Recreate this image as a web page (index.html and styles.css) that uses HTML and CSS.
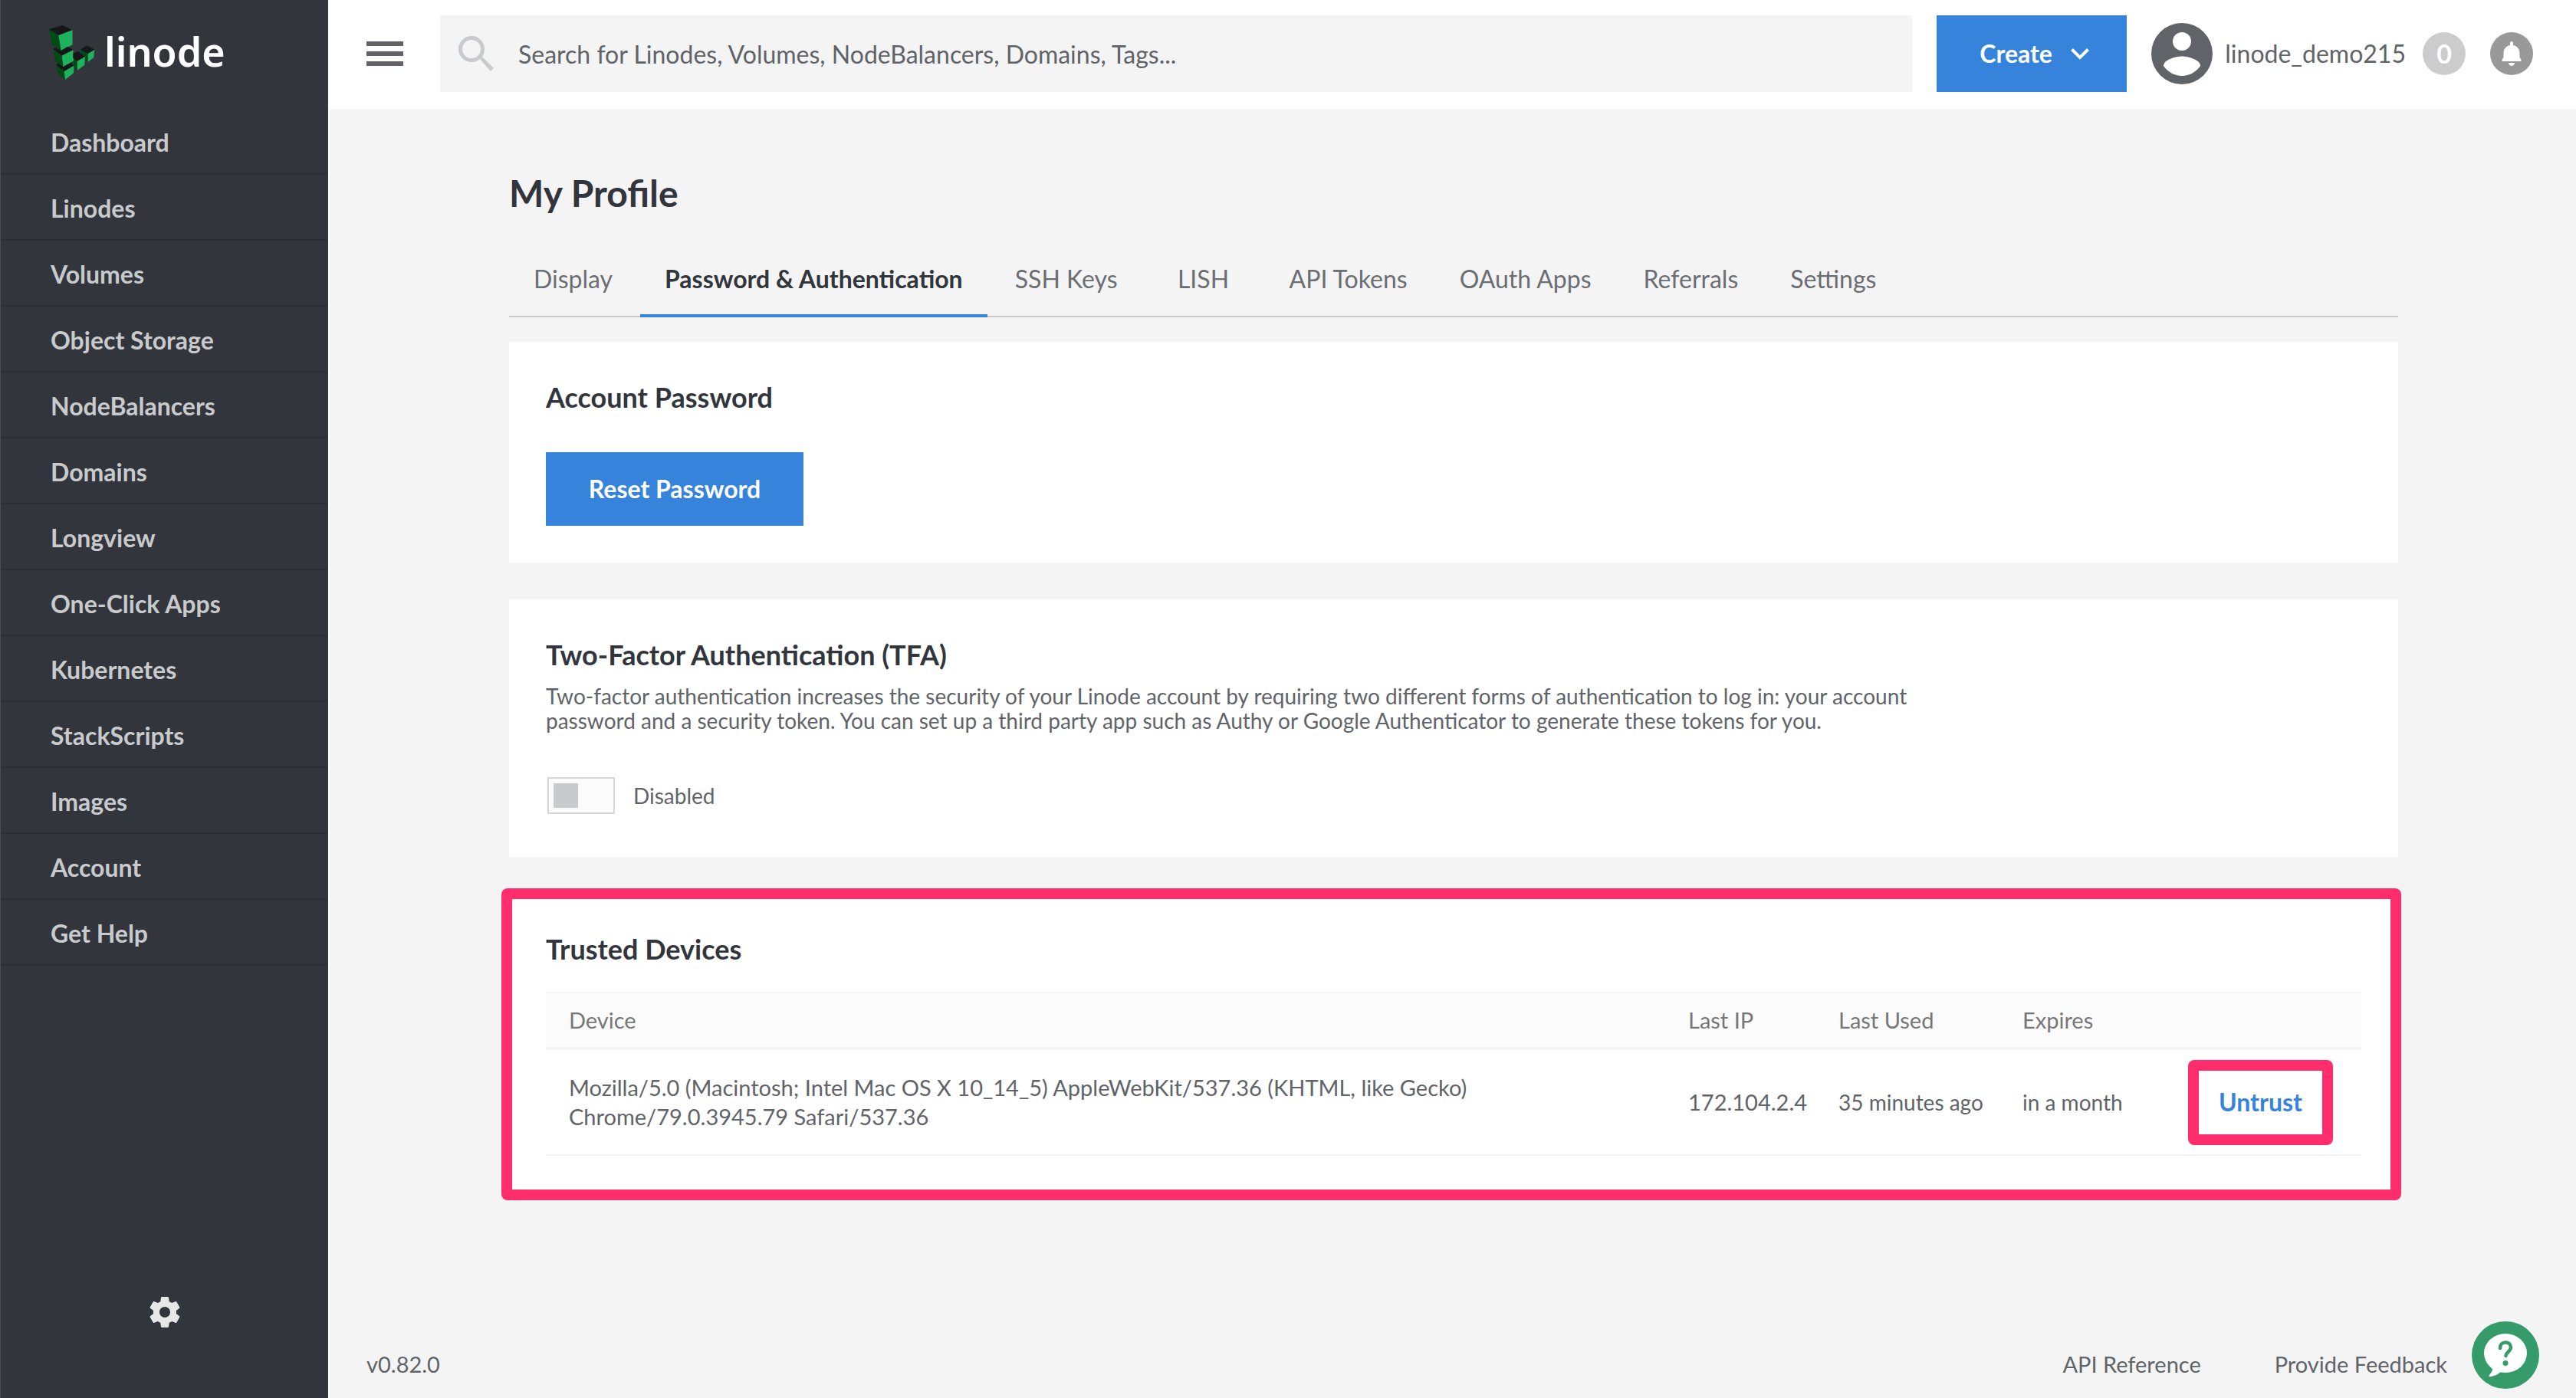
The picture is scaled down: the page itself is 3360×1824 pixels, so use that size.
FILE: index.html
```html
<!DOCTYPE html>
<html lang="en">
<head>
<meta charset="utf-8">
<title>My Profile</title>
<link rel="stylesheet" href="styles.css">
</head>
<body>
<div class="app">
  <aside class="sidebar">
    <a class="logo" href="#" aria-label="linode">
      <svg class="logo-mark" viewBox="0 -4 60 76" aria-hidden="true">
        <path fill="#004b16" d="M0 5L12.300 13 15.700 33 4 25.500zM5.300 31L16.700 39.500 18.500 54.300 8.300 47.500zM9.300 51.500L19.700 60 21 71 11.300 63zM31.300 43L36.700 46.700 37 58.700 32.300 54.300zM41 31.700L50.700 37V48L47 45.700V40.700L42 37z"/>
        <path fill="#1cb35c" d="M12.300 13L30.500 6V25.500L15.700 33zM16.700 39.500L31.300 32 32 46.300 18.500 54.300zM19.700 60L32.300 52.500 32 62.300 21 71zM36.700 46.700L47 40.700 46.300 51.700 37 58.700zM50.700 37L59.300 31.700 58.300 42 50.700 48z"/>
        <path fill="#161718" d="M0 5L17.700 0 30.300 6 12.300 13zM5.300 31L8 29 15.700 33 24.300 27.700 31.300 32 16.700 39.500zM9.300 51.500L11.300 49.300 18.300 54.300 28.300 48.700 32.300 52.500 19.700 60zM31.300 37L37.700 33.700 47 40.700 36.700 46.700 31.300 43zM41 31.700L49.700 26.300 59.300 31.700 50.700 37z"/>
      </svg>
      <span class="logo-text">linode</span>
    </a>
    <nav class="nav">
      <a href="#">Dashboard</a>
      <a href="#">Linodes</a>
      <a href="#">Volumes</a>
      <a href="#">Object Storage</a>
      <a href="#">NodeBalancers</a>
      <a href="#">Domains</a>
      <a href="#">Longview</a>
      <a href="#">One-Click Apps</a>
      <a href="#">Kubernetes</a>
      <a href="#">StackScripts</a>
      <a href="#">Images</a>
      <a href="#">Account</a>
      <a href="#">Get Help</a>
    </nav>
    <button class="gear" type="button" aria-label="Settings">
      <svg viewBox="0 0 24 24" aria-hidden="true"><path d="M19.43 12.98c.04-.32.07-.64.07-.98s-.03-.66-.07-.98l2.11-1.65c.19-.15.24-.42.12-.64l-2-3.46c-.12-.22-.39-.3-.61-.22l-2.49 1c-.52-.4-1.08-.73-1.69-.98l-.38-2.65C14.46 2.18 14.25 2 14 2h-4c-.25 0-.46.18-.49.42l-.38 2.65c-.61.25-1.17.59-1.69.98l-2.49-1c-.23-.09-.49 0-.61.22l-2 3.46c-.13.22-.07.49.12.64l2.11 1.65c-.04.32-.07.65-.07.98s.03.66.07.98l-2.11 1.65c-.19.15-.24.42-.12.64l2 3.46c.12.22.39.3.61.22l2.49-1c.52.4 1.08.73 1.69.98l.38 2.65c.03.24.24.42.49.42h4c.25 0 .46-.18.49-.42l.38-2.65c.61-.25 1.17-.59 1.69-.98l2.49 1c.23.09.49 0 .61-.22l2-3.46c.12-.22.07-.49-.12-.64l-2.11-1.65zM12 15.500c-1.930 0-3.500-1.570-3.500-3.500s1.570-3.500 3.500-3.500 3.500 1.570 3.500 3.500-1.570 3.500-3.500 3.500z"/></svg>
    </button>
  </aside>
  <div class="page">
    <header class="topbar">
      <button class="menu" type="button" aria-label="Toggle menu"><span></span><span></span><span></span></button>
      <label class="search">
        <svg viewBox="0 0 46 46" aria-hidden="true"><circle cx="17" cy="17" r="14.500" fill="none" stroke="#c8cacc" stroke-width="5"/><path d="M28 30l3-3 15 15-4 4z" fill="#c8cacc"/></svg>
        <input type="text" aria-label="Search" placeholder="Search for Linodes, Volumes, NodeBalancers, Domains, Tags...">
      </label>
      <button class="btn create" type="button">Create
        <svg viewBox="0 0 24 16" aria-hidden="true"><path d="M1.500 2.500L12 13 22.500 2.500" fill="none" stroke="#fff" stroke-width="4"/></svg>
      </button>
      <button class="user" type="button">
        <svg viewBox="0 0 80 80" aria-hidden="true"><circle cx="40" cy="40" r="40" fill="#606469"/><circle cx="40" cy="24" r="12" fill="#fff"/><path d="M16 56c0-8 16-12.400 24-12.400S64 48 64 56a28.800 28.800 0 0 1-48 0z" fill="#fff"/></svg>
        <span>linode_demo215</span>
      </button>
      <span class="badge">0</span>
      <button class="bell" type="button" aria-label="Notifications">
        <svg viewBox="0 0 56 56" aria-hidden="true"><path d="M28 12a2 2 0 0 1 2 2v3c5 1 8.500 5 8.500 10v5c0 2 2 3 2 5v1h-25v-1c0-2 2-3 2-5v-5c0-5 3.500-9 8.500-10v-3a2 2 0 0 1 2-2zM24 40h8c0 2-2 4-4 4s-4-2-4-4z" fill="#fff"/></svg>
      </button>
    </header>
    <main class="content">
      <h1>My Profile</h1>
      <nav class="tabs">
        <a href="#">Display</a>
        <a href="#" class="active" aria-current="page">Password &amp; Authentication</a>
        <a href="#">SSH Keys</a>
        <a href="#">LISH</a>
        <a href="#">API Tokens</a>
        <a href="#">OAuth Apps</a>
        <a href="#">Referrals</a>
        <a href="#">Settings</a>
      </nav>
      <section class="card">
        <h2>Account Password</h2>
        <button class="btn reset" type="button">Reset Password</button>
      </section>
      <section class="card tfa">
        <h2>Two-Factor Authentication (TFA)</h2>
        <p>Two-factor authentication increases the security of your Linode account by requiring two different forms of authentication to log in: your account password and a security token. You can set up a third party app such as Authy or Google Authenticator to generate these tokens for you.</p>
        <label class="toggle"><input type="checkbox">Disabled</label>
      </section>
      <section class="card devices">
        <h2>Trusted Devices</h2>
        <table>
          <colgroup><col><col class="c-ip"><col class="c-used"><col class="c-exp"><col class="c-act"></colgroup>
          <thead>
            <tr><th>Device</th><th>Last IP</th><th>Last Used</th><th>Expires</th><th></th></tr>
          </thead>
          <tbody>
            <tr>
              <td class="major"><div class="agent">Mozilla/5.0 (Macintosh; Intel Mac OS X 10_14_5) AppleWebKit/537.36 (KHTML, like Gecko) Chrome/79.0.3945.79 Safari/537.36</div></td>
              <td class="major">172.104.2.4</td>
              <td>35 minutes ago</td>
              <td>in a month</td>
              <td class="action"><button class="untrust" type="button">Untrust</button></td>
            </tr>
          </tbody>
        </table>
      </section>
    </main>
    <footer class="footer">
      <span>v0.82.0</span>
      <a href="#">API Reference</a>
      <a href="#">Provide Feedback</a>
    </footer>
  </div>
</div>
<button class="help" type="button" aria-label="Help">
  <svg viewBox="0 0 88 88" aria-hidden="true"><circle cx="44" cy="44" r="44" fill="#359c69"/><ellipse cx="44" cy="41.500" rx="28" ry="25.500" fill="#fff"/><path d="M23 58l4 4c0 4-3 6-4 8-1 2 0 2.500 2 2 6-1 9-3 13-6z" fill="#fff"/><path d="M37 35c0-5 3-7.500 7-7.500s7 2.500 7 6.500c0 5-6.500 6.500-6.500 11" fill="none" stroke="#359c69" stroke-width="4.500" stroke-linecap="round"/><circle cx="44" cy="54.500" r="3.500" fill="#359c69"/></svg>
</button>
</body>
</html>
```
FILE: styles.css
```css
* { box-sizing: border-box; }
body {
  margin: 0;
  background: #f4f4f4;
  color: #606469;
  font-family: Lato, "Liberation Sans", sans-serif;
  font-size: 28px;
  line-height: 32px;
}
button { padding: 0; border: 0; background: none; font: inherit; color: inherit; cursor: pointer; }
a { color: inherit; text-decoration: none; }
svg { display: block; }
.app { display: flex; min-height: 100vh; }

.sidebar {
  flex: 0 0 428px;
  display: flex;
  flex-direction: column;
  align-items: stretch;
  background: #32363c;
  border-left: 1px solid #494c51;
}
.logo { display: flex; align-items: center; height: 142px; padding: 0 0 8px 63px; }
.logo-mark { width: 60px; height: 76px; }
.logo-text { margin-left: 12px; color: #fff; font: 600 52px/64px "Noto Sans", sans-serif; }
.nav { display: flex; flex-direction: column; }
.nav a {
  height: 86px;
  padding: 0 65px;
  border-bottom: 2px solid #2b2e34;
  color: #c8cacc;
  font-size: 32px;
  font-weight: 700;
  line-height: 88px;
}
.gear { align-self: center; margin: auto 0 88px; }
.gear svg { width: 48px; height: 48px; fill: #e7e7e7; }

.page { flex: 1; min-width: 0; display: flex; flex-direction: column; border-left: 2px solid #fff; }
.topbar { display: flex; align-items: center; height: 142px; padding: 0 56px 2px 48px; background: #fff; }
.menu { display: grid; gap: 7px; }
.menu span { display: block; width: 48px; height: 6px; background: #606469; }
.search { flex: 1; display: flex; align-items: center; height: 100px; margin-left: 48px; padding-left: 24px; background: #f4f4f4; }
.search svg { width: 46px; height: 46px; }
.search input {
  flex: 1;
  height: 100px;
  margin-left: 32px;
  padding: 0;
  border: 0;
  background: none;
  color: #606469;
  font: 32px Lato, sans-serif;
}
.search input::placeholder { color: #606469; opacity: 1; }
.btn { background: #3683dc; color: #fff; font-size: 32px; font-weight: 700; }
.create { display: flex; align-items: center; gap: 24px; width: 248px; height: 100px; margin-left: 32px; padding-left: 56px; }
.create svg { width: 24px; height: 16px; }
.user { display: flex; align-items: center; gap: 16px; margin-left: 32px; font-size: 32px; }
.user svg { width: 80px; height: 80px; }
.badge, .bell { width: 56px; height: 56px; border-radius: 50%; }
.badge { margin-left: 22px; background: #ccc; color: #fff; font-weight: 700; font-size: 34px; line-height: 56px; text-align: center; }
.bell { margin-left: 32px; background: #999; }

.content { width: 2466px; max-width: 100%; margin: 0 auto; padding: 78px 0 0 2px; }
h1 { margin: 0; color: #32363c; font-size: 48px; line-height: 64px; }
.tabs { display: flex; gap: 4px; margin-top: 34px; height: 96px; box-shadow: inset 0 -2px #c7c9c9; }
.tabs a { min-width: 152px; padding: 0 32px; font-size: 32px; line-height: 92px; text-align: center; color: #6b6e73; }
.tabs .active { border-bottom: 4px solid #3683dc; color: #32363c; font-weight: 700; }
.card { margin-top: 48px; padding: 48px; background: #fff; }
.tabs + .card { margin-top: 32px; }
h2 { margin: 0; color: #32363c; font-size: 36px; line-height: 48px; }
.reset { display: block; width: 336px; height: 96px; margin-top: 48px; }
.tfa p { max-width: 1800px; margin: 14px 0 0; }
.toggle { display: flex; align-items: center; gap: 24px; margin: 58px 0 8px 2px; }
.toggle input {
  appearance: none;
  width: 88px;
  height: 48px;
  margin: 0;
  border: 2px solid #d5d6d8;
  background: linear-gradient(#c8cacc, #c8cacc) 6px center / 32px 32px no-repeat #fbfbfb;
}

/* Highlight frame drawn over the edges of the card */
.devices { position: relative; }
.devices::after {
  content: "";
  position: absolute;
  inset: -7px -4px -10px -10px;
  border: 14px solid #ff2d6c;
  border-radius: 8px;
  pointer-events: none;
}
table { width: 100%; margin-top: 32px; border-collapse: separate; border-spacing: 0; table-layout: fixed; }
th { height: 76px; padding: 0 0 0 30px; border-top: 2px solid #f4f4f4; border-bottom: 4px solid #f4f4f4; background: #fbfbfb; color: #777; font-size: 29px; font-weight: 400; text-align: left; }
td { height: 138px; padding: 0 0 0 30px; border-bottom: 2px solid #f4f4f4; line-height: 38px; }
.major { font-size: 29px; }
.agent { max-width: 1200px; }
.c-ip { width: 196px; }
.c-used { width: 240px; }
.c-exp { width: 216px; }
.c-act { width: 256px; }
.action { padding: 0; }
.untrust { display: block; width: 189px; height: 111px; margin-left: 30px; border: 14px solid #ff2d6c; border-radius: 8px; color: #3683dc; font-size: 32px; font-weight: 700; }

.footer { display: flex; align-items: center; gap: 96px; margin-top: auto; padding: 0 168px 28px 48px; font-size: 29px; }
.footer span { margin-right: auto; }
.help { position: fixed; right: 48px; bottom: 12px; }
.help svg { width: 88px; height: 88px; }
```
